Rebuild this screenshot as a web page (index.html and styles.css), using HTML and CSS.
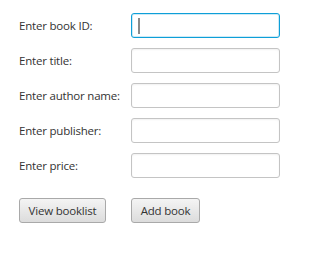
FILE: index.html
```html
<!DOCTYPE html>
<html lang="en">
<head>
    <meta charset="UTF-8">
    <title>Book Entry</title>
    <link rel="stylesheet" href="styles.css">
</head>
<body>
    <form class="book-form">
        <div class="fields">
            <label for="bookId">Enter book ID:</label>
            <div class="field focused"><span class="caret"></span></div>

            <label for="title">Enter title:</label>
            <div class="field"></div>

            <label for="author">Enter author name:</label>
            <div class="field"></div>

            <label for="publisher">Enter publisher:</label>
            <div class="field"></div>

            <label for="price">Enter price:</label>
            <div class="field"></div>
        </div>

        <div class="actions">
            <button type="button" class="btn btn-list">View booklist</button>
            <button type="button" class="btn btn-add">Add book</button>
        </div>
    </form>
</body>
</html>
```

FILE: styles.css
```css
body {
    margin: 0;
    background: #ffffff;
    font-family: "Open Sans", "Noto Sans", sans-serif;
    font-size: 11.5px;
    letter-spacing: -0.2px;
    color: #333333;
}

.book-form {
    padding: 13px 0 0 19px;
}

.fields {
    display: grid;
    grid-template-columns: 112px 149px;
    grid-auto-rows: 25px;
    row-gap: 10px;
    align-items: center;
}

.fields label {
    line-height: 25px;
}

.field {
    position: relative;
    box-sizing: border-box;
    height: 25px;
    border: 1px solid #c4c4c4;
    border-radius: 3px;
    background: #ffffff;
    box-shadow: inset 0 1px 2px rgba(0, 0, 0, 0.06);
}

.field.focused {
    border-color: #0e9fd8;
    box-shadow: inset 0 0 0 1px #cdeaf6;
}

.caret {
    position: absolute;
    left: 6px;
    top: 4px;
    width: 2px;
    height: 16px;
    background: #8a8a8a;
}

.actions {
    display: flex;
    gap: 25px;
    margin-top: 20px;
}

.btn {
    box-sizing: border-box;
    height: 25px;
    padding: 0;
    border: 1px solid #a9a9a9;
    border-radius: 3px;
    background: linear-gradient(#f4f4f4, #dcdcdc);
    font-family: inherit;
    font-size: 11.5px;
    letter-spacing: -0.2px;
    color: #333333;
}

.btn-list {
    width: 87px;
}

.btn-add {
    width: 69px;
}
```
